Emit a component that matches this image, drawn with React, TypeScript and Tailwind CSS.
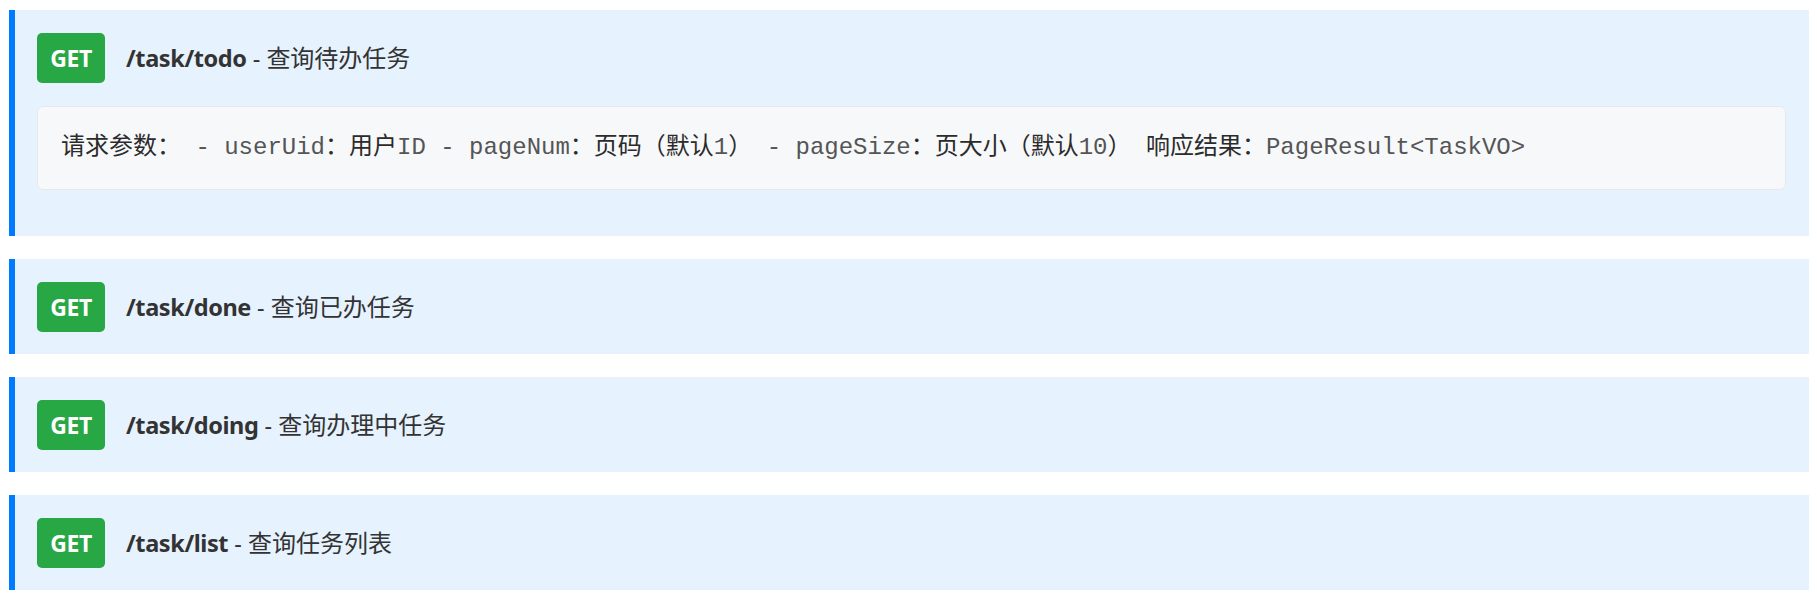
import React from "react";

type Api = {
  method: string;
  path: string;
  desc: string;
  detail?: string;
};

const apis: Api[] = [
  {
    method: "GET",
    path: "/task/todo",
    desc: "查询待办任务",
    detail:
      "请求参数：\n- userUid：用户ID\n- pageNum：页码（默认1）\n- pageSize：页大小（默认10）\n响应结果：PageResult<TaskVO>",
  },
  { method: "GET", path: "/task/done", desc: "查询已办任务" },
  { method: "GET", path: "/task/doing", desc: "查询办理中任务" },
  { method: "GET", path: "/task/list", desc: "查询任务列表" },
];

// CJK glyphs fall back to a darker sans, the latin part stays grey mono
function Detail({ text }: { text: string }) {
  const parts = text.split(/([\u3000-\u9fff\uff00-\uffef]+)/);
  return (
    <>
      {parts.map((p, i) =>
        /[\u3000-\u9fff\uff00-\uffef]/.test(p) ? (
          <span key={i} className="text-[#2b2b2b]">
            {p}
          </span>
        ) : (
          <span key={i} className="text-[#555]">
            {p}
          </span>
        )
      )}
    </>
  );
}

function ApiCard({ api }: { api: Api }) {
  return (
    <div className="mb-[23px] border-l-[6px] border-[#007bff] bg-[#e6f2fe] pl-[22px] pr-[23px] pt-[23px] pb-[22px]">
      <div className="flex items-center">
        <span className="flex h-[50px] w-[68px] items-center justify-center rounded-[5px] bg-[#28a745] text-[23px] font-bold tracking-[-0.5px] text-white">
          {api.method}
        </span>
        <span className="ml-[21px] text-[23.5px] leading-[32px] text-[#333]">
          <strong className="font-bold tracking-[-0.4px]">{api.path}</strong> - <span className="text-[24px]">{api.desc}</span>
        </span>
      </div>
      {api.detail && (
        <div className="mt-[23px] mb-[24px] flex h-[84px] items-center rounded-[6px] border border-[#e6e9ec] bg-[#f7f8fa] px-[23px]">
          <code className="whitespace-normal font-['Liberation_Mono','Noto_Sans_CJK_SC',monospace] text-[24px] leading-[36px]">
            <Detail text={api.detail} />
          </code>
        </div>
      )}
    </div>
  );
}

export default function App() {
  return (
    <div className="min-h-screen bg-white pl-[9px] pr-[8px] pt-[10px] font-['Noto_Sans','Noto_Sans_CJK_SC',sans-serif]">
      {apis.map((api) => (
        <ApiCard key={api.path} api={api} />
      ))}
    </div>
  );
}
